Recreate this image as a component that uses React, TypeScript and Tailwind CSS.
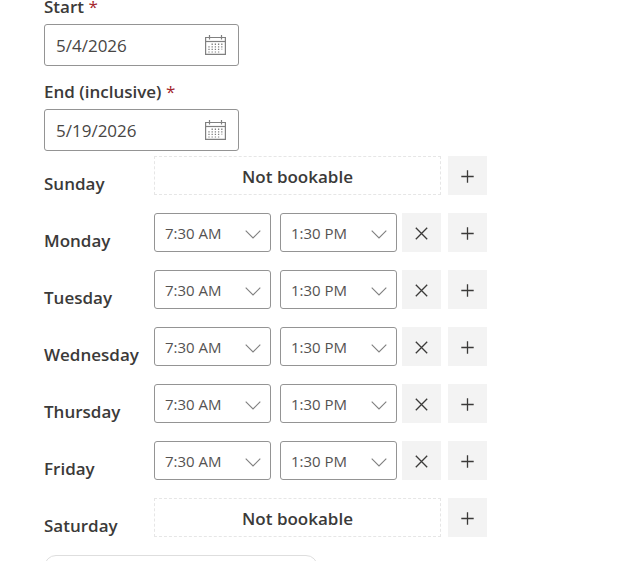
import { useState } from "react";

type Slot = { start: string; end: string };
type Day = { name: string; slot: Slot | null };

const week: Day[] = [
  { name: "Sunday", slot: null },
  { name: "Monday", slot: { start: "7:30 AM", end: "1:30 PM" } },
  { name: "Tuesday", slot: { start: "7:30 AM", end: "1:30 PM" } },
  { name: "Wednesday", slot: { start: "7:30 AM", end: "1:30 PM" } },
  { name: "Thursday", slot: { start: "7:30 AM", end: "1:30 PM" } },
  { name: "Friday", slot: { start: "7:30 AM", end: "1:30 PM" } },
  { name: "Saturday", slot: null },
];

const times = ["7:30 AM", "8:00 AM", "12:00 PM", "1:30 PM", "5:00 PM"];

function CalendarIcon() {
  return (
    <svg width="21" height="20" viewBox="0 0 21 20" fill="none" aria-hidden="true">
      <path d="M.6 2.5h19.8v16.9H.6z" stroke="#808080" strokeWidth="1.2" />
      <path d="M.6 6.5h19.8" stroke="#808080" strokeWidth="1.2" />
      <path d="M4.5 0v4.5M16.5 0v4.5" stroke="#808080" strokeWidth="1.2" />
      <path
        d="M4 11.2v6.4M7.2 8.6v9M10.4 8.6v9M13.6 8.6v9M16.8 8.6v6"
        stroke="#808080"
        strokeWidth="1.3"
        strokeDasharray="1.3 1.3"
      />
    </svg>
  );
}

function DateField({ id, label, initial }: { id: string; label: string; initial: string }) {
  const [value, setValue] = useState(initial);
  return (
    <div className="flex flex-col gap-[10px]">
      <label htmlFor={id} className="text-[17px] leading-[14px] font-semibold">
        {label} <span className="font-normal text-[#a4262c]">*</span>
      </label>
      <div className="flex h-[42px] w-[195px] items-center rounded-[3px] border border-[#949494] pr-3 pl-[11px]">
        <input
          id={id}
          type="text"
          value={value}
          onChange={(e) => setValue(e.target.value)}
          className="min-w-0 flex-1 bg-transparent pt-[2px] text-[17px] leading-6 text-[#484644] outline-none"
        />
        <button type="button" aria-label={`Choose ${label} date`}>
          <CalendarIcon />
        </button>
      </div>
    </div>
  );
}

function TimeSelect({ label, initial }: { label: string; initial: string }) {
  return (
    <div className="relative w-[117px]">
      <select
        aria-label={label}
        defaultValue={initial}
        className="h-[39px] w-full appearance-none rounded-[3px] border border-[#949494] bg-white pt-[2px] pl-[10px] text-[15px] text-[#555352] outline-none"
      >
        {times.map((t) => (
          <option key={t}>{t}</option>
        ))}
      </select>
      <svg
        className="pointer-events-none absolute top-[17px] right-[10px]"
        width="16"
        height="9"
        viewBox="0 0 16 9"
        fill="none"
        aria-hidden="true"
      >
        <path d="M.7.7 8 8 15.3.7" stroke="#808080" strokeWidth="1.1" />
      </svg>
    </div>
  );
}

function IconButton({ label, path }: { label: string; path: string }) {
  return (
    <button
      type="button"
      aria-label={label}
      className="flex size-[39px] items-center justify-center bg-[#f3f3f3] pt-[2px]"
    >
      <svg width="13" height="13" viewBox="0 0 13 13" fill="none" aria-hidden="true">
        <path d={path} stroke="#3b3a39" strokeWidth="1.3" />
      </svg>
    </button>
  );
}

function DayRow({ name, slot }: Day) {
  return (
    <div className="flex h-[39px]">
      <div className="w-[110px] pt-4 text-[17px] leading-6 font-semibold">{name}</div>
      <div className="flex gap-[7px]">
        {slot ? (
          <div className="flex w-[287px] justify-between">
            <div className="flex gap-[9px]">
              <TimeSelect label={`${name} start time`} initial={slot.start} />
              <TimeSelect label={`${name} end time`} initial={slot.end} />
            </div>
            <IconButton label={`Remove ${name} hours`} path="M.8.8l11.4 11.4M12.2.8.8 12.2" />
          </div>
        ) : (
          <div className="flex w-[287px] items-center justify-center border border-dashed border-[#e6e6e6] pt-[2px] text-[17px] leading-6 font-semibold">
            Not bookable
          </div>
        )}
        <IconButton label={`Add ${name} hours`} path="M6.5.3v12.4M.3 6.5h12.4" />
      </div>
    </div>
  );
}

export default function App() {
  return (
    <main className="h-screen overflow-hidden bg-white pl-11 font-['Open_Sans','Noto_Sans',sans-serif] text-[#3b3a39]">
      <form>
        <div className="flex flex-col gap-[19px]">
          <DateField id="start" label="Start" initial="5/4/2026" />
          <DateField id="end" label="End (inclusive)" initial="5/19/2026" />
        </div>
        <div className="mt-[5px] flex flex-col gap-[18px]">
          {week.map((day) => (
            <DayRow key={day.name} {...day} />
          ))}
        </div>
        <div className="mt-[18px] h-12 w-[274px] rounded-xl border border-[#dedede]" />
      </form>
    </main>
  );
}
